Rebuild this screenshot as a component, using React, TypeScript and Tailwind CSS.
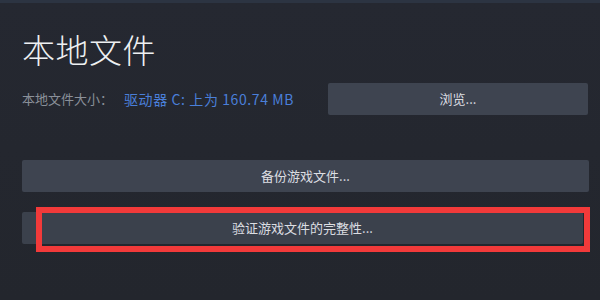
import React from "react";

export default function App() {
  const font = { fontFamily: '"Noto Sans CJK SC", "Noto Sans", sans-serif' };
  return (
    <div
      className="relative w-[600px] h-[300px] overflow-hidden bg-[linear-gradient(180deg,#252831_0%,#23262d_100%)]"
      style={font}
    >
      <div className="h-[3px] bg-[#2c3442]" />
      <div className="pl-[22px] pr-[11px] pt-[26px]">
        <div className="text-[33px] leading-[40px] text-[#eef0f2] font-light tracking-[0.5px]">本地文件</div>
        <div className="mt-[14px] flex items-center">
          <div className="w-[306px] text-[13px] leading-[20px] whitespace-nowrap flex items-center">
            <span className="text-[#8a9099]">本地文件大小：</span>
            <span className="ml-[11px] text-[14px] tracking-[0.6px] text-[#4a7fd9]">驱动器 C: 上为 160.74 MB</span>
          </div>
          <button className="w-[260px] h-[32px] rounded-[2px] bg-[#3e4450] text-[13px] text-[#dcdee2]">
            浏览...
          </button>
        </div>
        <button className="mt-[45px] w-[567px] h-[32px] rounded-[2px] bg-[#3e4450] text-[13px] text-[#dcdee2] block">
          备份游戏文件...
        </button>
        <button className="mt-[20px] w-[561px] h-[32px] rounded-[2px] bg-[#3b414c] text-[13px] text-[#dcdee2] block">
          验证游戏文件的完整性...
        </button>
      </div>
      <div className="absolute left-[36px] top-[207px] w-[554px] h-[45px] border-[6px] border-[#f23a3a] pointer-events-none" />
    </div>
  );
}
